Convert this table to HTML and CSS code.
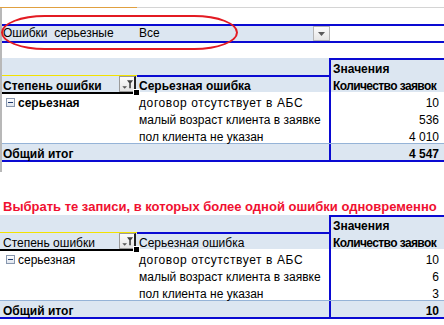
FILE: index.html
```html
<!DOCTYPE html>
<html lang="ru">
<head>
<meta charset="utf-8">
<title>Pivot</title>
<link rel="stylesheet" href="styles.css">
</head>
<body>
<div class="page">
  <div class="colhead"><div class="colhead-sel"></div><div class="colhead-rest"></div></div>
  <div class="sheet">
    <div class="filter-row">
      <div class="cell f-label">Ошибки&nbsp; серьезные</div>
      <div class="cell f-value">Все</div>
      <div class="f-btn"><svg width="7" height="4" viewBox="0 0 7 4"><path d="M0 0h7L3.5 4z" fill="#5a5a5a"/></svg></div>
      <div class="f-empty"></div>
    </div>
    <div class="pivot pivot-top">
      <div class="prow">
        <div class="cell c1 lb"></div>
        <div class="cell c2 lb"></div>
        <div class="cell c3 lb bt-blue bold">Значения</div>
      </div>
      <div class="prow">
        <div class="cell c1 lb sel bold">Степень ошибки
          <span class="filter-btn"><svg width="15" height="15" viewBox="0 0 15 15"><path d="M2.5 9.5h5l-2.5 2.5z" fill="#555"/><path d="M7.5 3h6.5l-2.4 3.2v5.3h-1.7v-5.3z" fill="#404040"/></svg></span>
        </div>
        <div class="cell c2 lb bt-blue bold">Серьезная ошибка</div>
        <div class="cell c3 lb bold tight">Количество заявок</div>
      </div>
      <div class="prow">
        <div class="cell c1 bold"><span class="minus"></span>серьезная</div>
        <div class="cell c2 wide">договор отсутствует в АБС</div>
        <div class="cell c3 num">10</div>
      </div>
      <div class="prow">
        <div class="cell c1"></div>
        <div class="cell c2">малый возраст клиента в заявке</div>
        <div class="cell c3 num">536</div>
      </div>
      <div class="prow">
        <div class="cell c1"></div>
        <div class="cell c2">пол клиента не указан</div>
        <div class="cell c3 num">4 010</div>
      </div>
      <div class="prow total">
        <div class="cell c1 bold">Общий итог</div>
        <div class="cell c2"></div>
        <div class="cell c3 num bold">4 547</div>
      </div>
    </div>
  </div>
  <div class="note">Выбрать те записи, в которых более одной ошибки одновременно</div>
  <div class="pivot pivot-bottom">
    <div class="prow">
      <div class="cell c1 lb"></div>
      <div class="cell c2 lb"></div>
      <div class="cell c3 lb bt-blue bold">Значения</div>
    </div>
    <div class="prow">
      <div class="cell c1 lb sel">Степень ошибки
        <span class="filter-btn"><svg width="15" height="15" viewBox="0 0 15 15"><path d="M2.5 9.5h5l-2.5 2.5z" fill="#555"/><path d="M7.5 3h6.5l-2.4 3.2v5.3h-1.7v-5.3z" fill="#404040"/></svg></span>
      </div>
      <div class="cell c2 lb bt-blue">Серьезная ошибка</div>
      <div class="cell c3 lb bold tight">Количество заявок</div>
    </div>
    <div class="prow">
      <div class="cell c1"><span class="minus"></span>серьезная</div>
      <div class="cell c2 wide">договор отсутствует в АБС</div>
      <div class="cell c3 num">10</div>
    </div>
    <div class="prow">
      <div class="cell c1"></div>
      <div class="cell c2">малый возраст клиента в заявке</div>
      <div class="cell c3 num">6</div>
    </div>
    <div class="prow">
      <div class="cell c1"></div>
      <div class="cell c2">пол клиента не указан</div>
      <div class="cell c3 num">3</div>
    </div>
    <div class="prow total">
      <div class="cell c1 bold">Общий итог</div>
      <div class="cell c2"></div>
      <div class="cell c3 num bold">10</div>
    </div>
  </div>
  <div class="ellipse"></div>
</div>
</body>
</html>
```

FILE: styles.css
```css
:root {
  --lb: #dce6f1;
  --blue: #0a0ad2;
  --sep: #95b3d7;
}
* { box-sizing: border-box; }
html, body { margin: 0; padding: 0; background: #fff; }
body {
  font-family: "Liberation Sans", Arial, sans-serif;
  font-size: 12px;
  color: #000;
  width: 444px;
  height: 325px;
  overflow: hidden;
}
.page { position: relative; width: 444px; }

.colhead { display: flex; height: 8px; }
.colhead-sel { width: 137px; border-bottom: 1px solid #e0a040; }
.colhead-rest { flex: 1; border-bottom: 1px solid #d4d4d4; }

.sheet {
  border-left: 2px solid #b8b8b8;
  padding-top: 16px;
  padding-bottom: 10px;
}

.filter-row {
  display: flex;
  height: 19px;
  border-top: 2px solid var(--blue);
  border-bottom: 2px solid var(--blue);
  margin-bottom: 15px;
}
.f-label { width: 135px; background: var(--lb); padding-left: 1px; padding-bottom: 2px; }
.f-value { width: 176px; background: var(--lb); padding-left: 2px; padding-bottom: 2px; }
.f-btn {
  width: 17px;
  border: 1px solid #b4b4b4;
  background: linear-gradient(#fbfbfb, #e6e6e6);
  display: flex;
  align-items: center;
  justify-content: center;
}
.f-empty { flex: 1; }

.cell {
  display: flex;
  align-items: flex-end;
  line-height: 12px;
  white-space: nowrap;
  min-width: 0;
  position: relative;
}
.bold { font-weight: bold; }
.lb { background: var(--lb); }
.tight { letter-spacing: -0.6px; }
.wide { letter-spacing: 0.6px; }

.prow {
  display: grid;
  grid-template-columns: 135px 192px 1fr;
  height: 17px;
}
.pivot-bottom .prow { grid-template-columns: 137px 192px 1fr; }

.c1 { padding-left: 1px; }
.pivot-bottom .c1 { padding-left: 3px; }
.c2 { padding-left: 2px; }
.c3 { border-left: 2px solid var(--blue); padding-left: 2px; }
.num { justify-content: flex-end; padding-right: 5px; }
.bt-blue { border-top: 2px solid var(--blue); }

.sel { border-top: 1px solid #f2e200; }
.sel::after {
  content: "";
  position: absolute;
  left: 0;
  right: 0;
  bottom: -2px;
  height: 2px;
  background: #000;
  z-index: 2;
}
.sel::before {
  content: "";
  position: absolute;
  right: -3px;
  bottom: -4px;
  width: 5px;
  height: 5px;
  background: #000;
  border: 1px solid #fff;
  z-index: 3;
}
.filter-btn {
  position: absolute;
  right: 1px;
  top: 0;
  width: 17px;
  height: 16px;
  border: 1px solid #9a9a9a;
  border-right: 2px solid #222;
  background: linear-gradient(#fdfdfd, #e4e4e4);
  display: flex;
  align-items: center;
  justify-content: center;
}
.filter-btn svg { display: block; }

.minus {
  width: 9px;
  height: 9px;
  border: 1px solid #8796ad;
  background: linear-gradient(#ffffff, #dfe5ee);
  margin: 0 3px 2px 3px;
  position: relative;
  flex: none;
}
.minus::after {
  content: "";
  position: absolute;
  left: 1px;
  right: 1px;
  top: 3px;
  height: 1px;
  background: #1f3b6e;
}

.total {
  height: 19px;
  border-top: 1px solid var(--sep);
  border-bottom: 2px solid var(--blue);
  background: var(--lb);
}

.note {
  height: 43px;
  display: flex;
  align-items: flex-end;
  padding: 0 0 2px 3px;
  color: #f01030;
  font-weight: bold;
  font-size: 13px;
  line-height: 13px;
  white-space: nowrap;
}

.ellipse {
  position: absolute;
  left: 1px;
  top: 15px;
  width: 237px;
  height: 35px;
  border: 2px solid #e31b23;
  border-radius: 45px / 18px;
  pointer-events: none;
}
```
